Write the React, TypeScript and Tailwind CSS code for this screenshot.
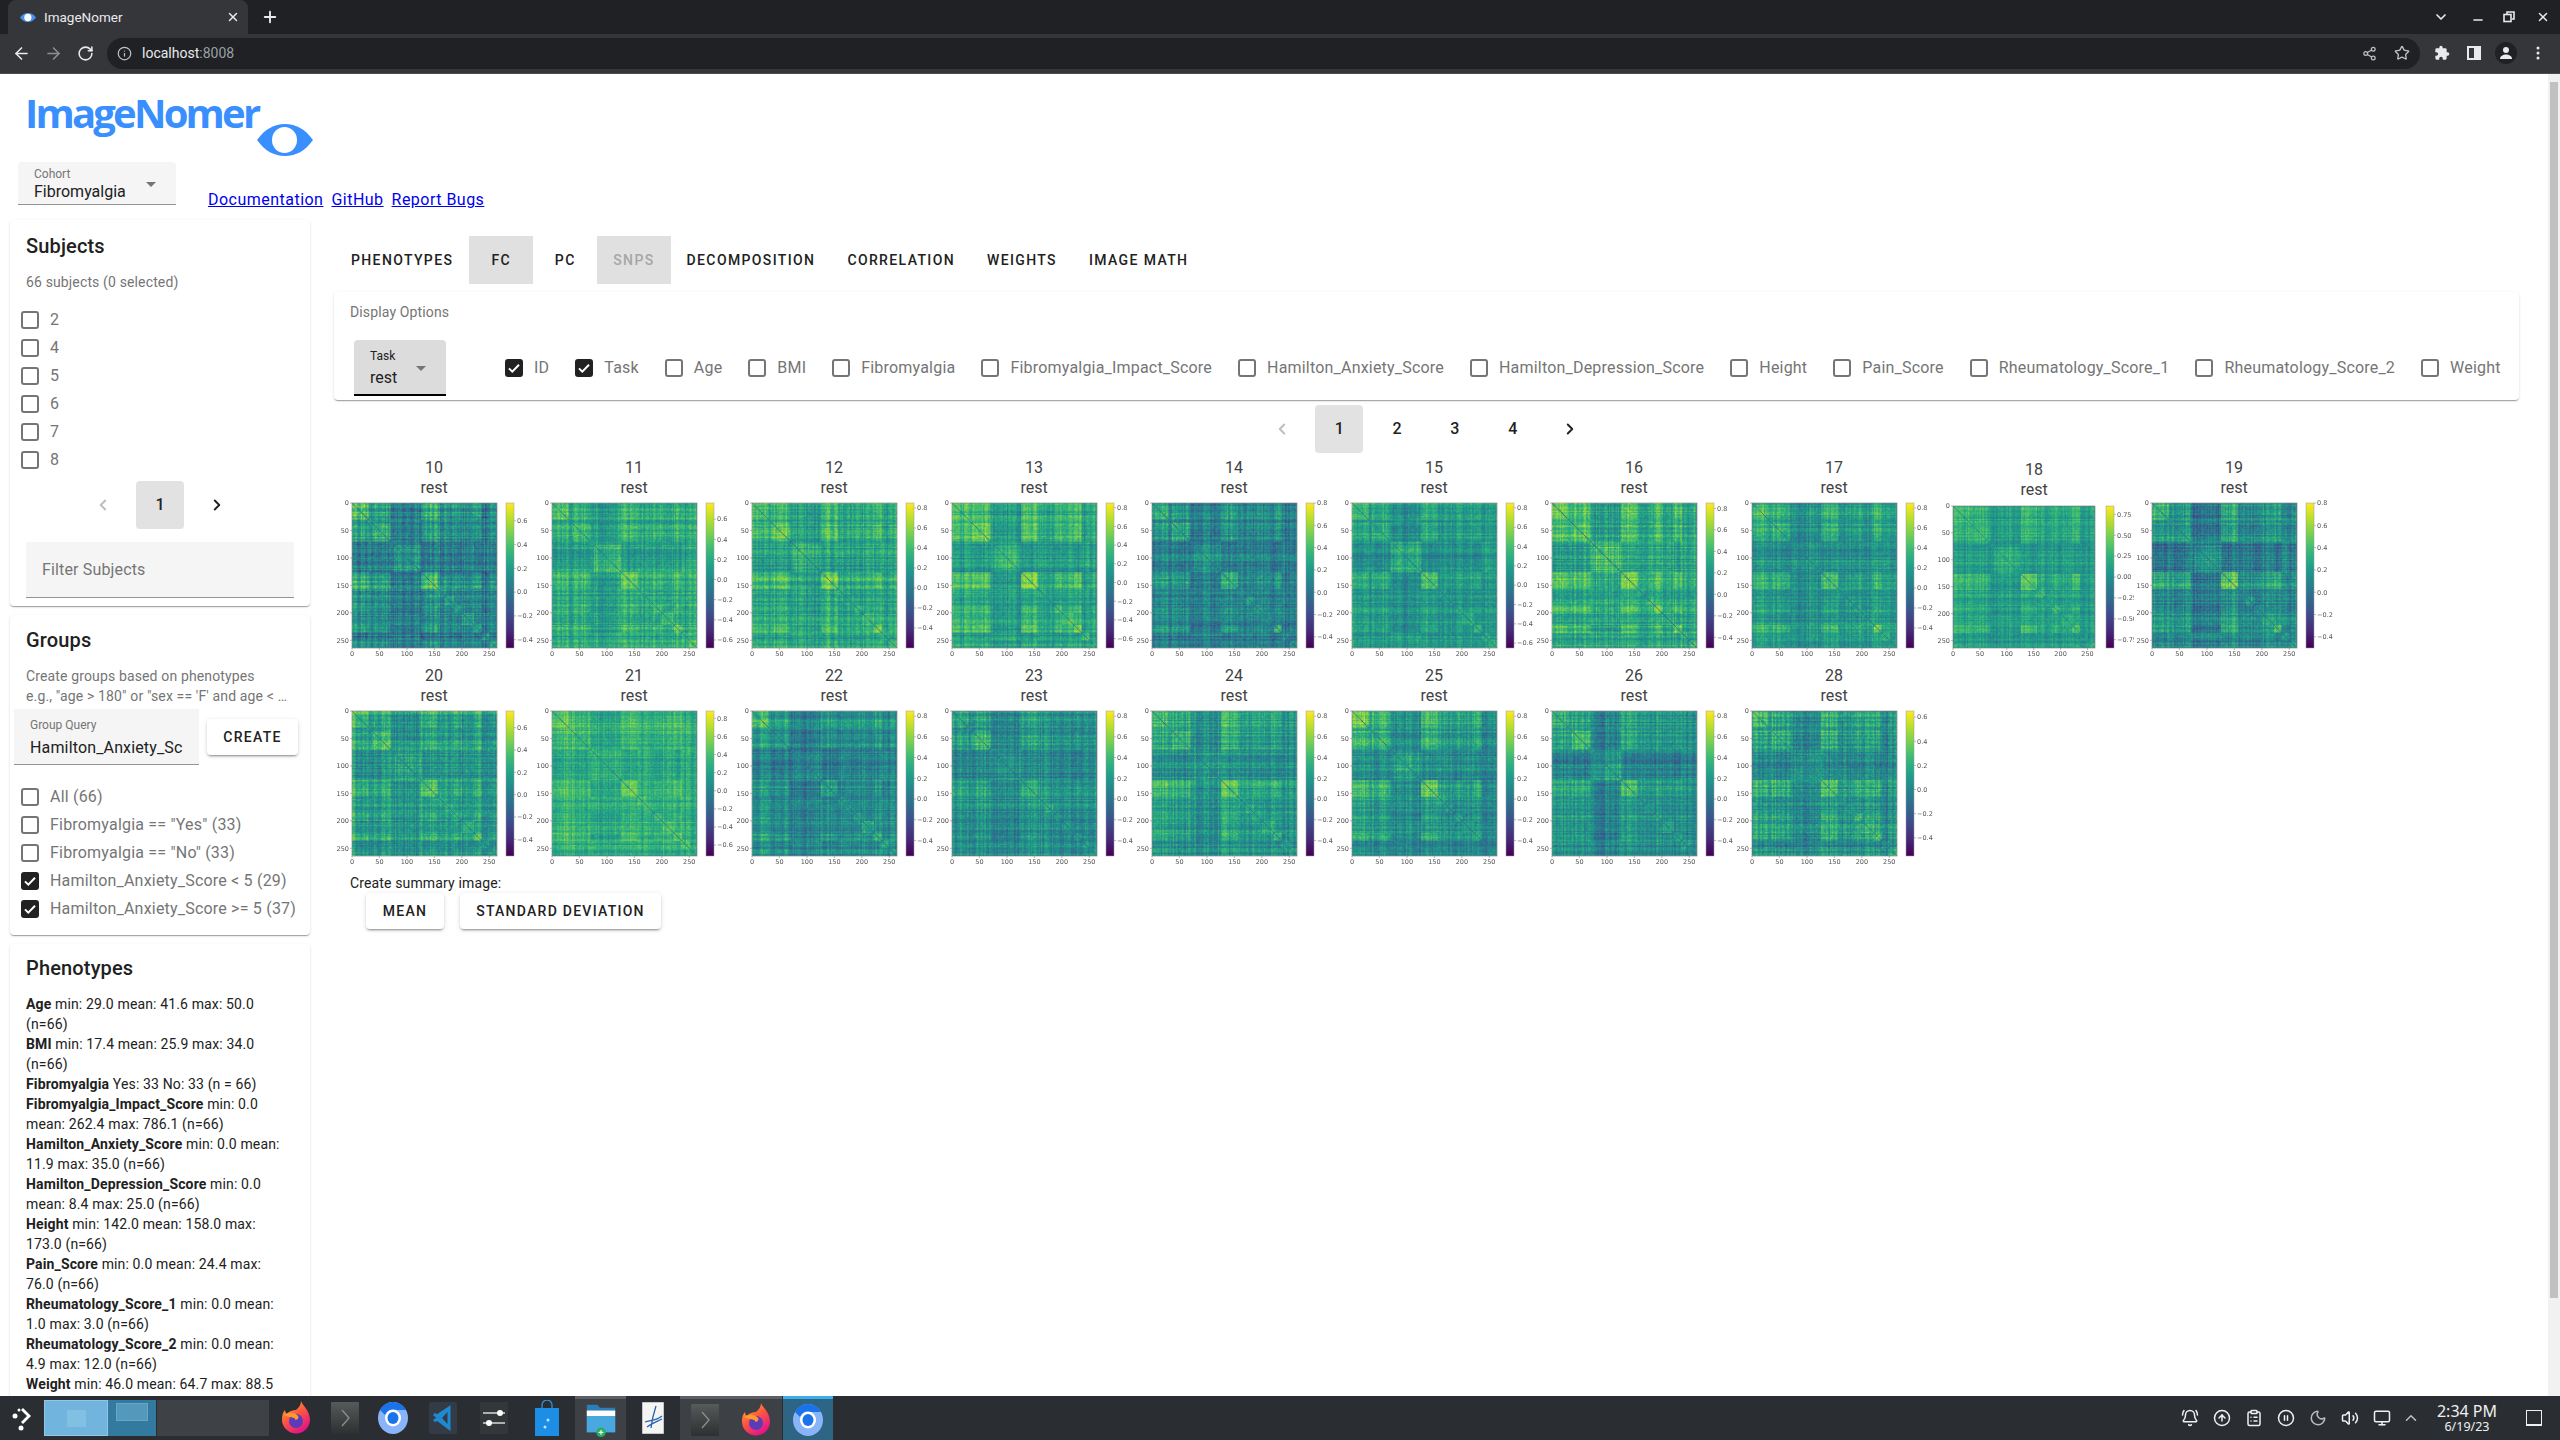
import { useEffect, useRef } from "react";
import {
  ArrowLeft,
  ArrowRight,
  BellRing,
  ChevronDown,
  ChevronLeft,
  ChevronRight,
  ChevronUp,
  CircleArrowUp,
  CirclePause,
  ClipboardList,
  Info,
  Minus,
  Monitor,
  Moon,
  Plus,
  RotateCw,
  Share2,
  Star,
  Volume2,
  X,
} from "lucide-react";

const subjects = ["2", "4", "5", "6", "7", "8"];
const groups = [
  { label: "All (66)", checked: false },
  { label: 'Fibromyalgia == "Yes" (33)', checked: false },
  { label: 'Fibromyalgia == "No" (33)', checked: false },
  { label: "Hamilton_Anxiety_Score < 5 (29)", checked: true },
  { label: "Hamilton_Anxiety_Score >= 5 (37)", checked: true },
];
const displayOptions = [
  { label: "ID", checked: true },
  { label: "Task", checked: true },
  { label: "Age", checked: false },
  { label: "BMI", checked: false },
  { label: "Fibromyalgia", checked: false },
  { label: "Fibromyalgia_Impact_Score", checked: false },
  { label: "Hamilton_Anxiety_Score", checked: false },
  { label: "Hamilton_Depression_Score", checked: false },
  { label: "Height", checked: false },
  { label: "Pain_Score", checked: false },
  { label: "Rheumatology_Score_1", checked: false },
  { label: "Rheumatology_Score_2", checked: false },
  { label: "Weight", checked: false },
];
const phenotypes = [
  ["Age", "min: 29.0 mean: 41.6 max: 50.0 (n=66)"],
  ["BMI", "min: 17.4 mean: 25.9 max: 34.0 (n=66)"],
  ["Fibromyalgia", "Yes: 33 No: 33 (n = 66)"],
  ["Fibromyalgia_Impact_Score", "min: 0.0 mean: 262.4 max: 786.1 (n=66)"],
  ["Hamilton_Anxiety_Score", "min: 0.0 mean: 11.9 max: 35.0 (n=66)"],
  ["Hamilton_Depression_Score", "min: 0.0 mean: 8.4 max: 25.0 (n=66)"],
  ["Height", "min: 142.0 mean: 158.0 max: 173.0 (n=66)"],
  ["Pain_Score", "min: 0.0 mean: 24.4 max: 76.0 (n=66)"],
  ["Rheumatology_Score_1", "min: 0.0 mean: 1.0 max: 3.0 (n=66)"],
  ["Rheumatology_Score_2", "min: 0.0 mean: 4.9 max: 12.0 (n=66)"],
  ["Weight", "min: 46.0 mean: 64.7 max: 88.5 (n=66)"],
];
const tabs = [
  { label: "PHENOTYPES" },
  { label: "FC", active: true },
  { label: "PC" },
  { label: "SNPS", disabled: true },
  { label: "DECOMPOSITION" },
  { label: "CORRELATION" },
  { label: "WEIGHTS" },
  { label: "IMAGE MATH" },
];

type Plot = { id: number; base: number; amp: number; min: number; max: number; step?: number; small?: boolean };

const plots: Plot[] = [
  { id: 10, base: 0.07, amp: 0.24, min: -0.47, max: 0.75 },
  { id: 11, base: 0.15, amp: 0.18, min: -0.68, max: 0.76 },
  { id: 12, base: 0.25, amp: 0.2, min: -0.6, max: 0.85 },
  { id: 13, base: 0.18, amp: 0.24, min: -0.7, max: 0.85 },
  { id: 14, base: 0.06, amp: 0.22, min: -0.5, max: 0.8 },
  { id: 15, base: 0.16, amp: 0.24, min: -0.65, max: 0.85 },
  { id: 16, base: 0.32, amp: 0.24, min: -0.5, max: 0.85 },
  { id: 17, base: 0.15, amp: 0.2, min: -0.6, max: 0.85 },
  { id: 18, base: 0.08, amp: 0.2, min: -0.85, max: 0.85, step: 0.25, small: true },
  { id: 19, base: 0.08, amp: 0.18, min: -0.5, max: 0.8 },
  { id: 20, base: 0.12, amp: 0.16, min: -0.55, max: 0.75 },
  { id: 21, base: 0.26, amp: 0.24, min: -0.72, max: 0.88 },
  { id: 22, base: 0.1, amp: 0.2, min: -0.55, max: 0.85 },
  { id: 23, base: 0.13, amp: 0.12, min: -0.55, max: 0.85 },
  { id: 24, base: 0.16, amp: 0.16, min: -0.55, max: 0.85 },
  { id: 25, base: 0.16, amp: 0.22, min: -0.55, max: 0.85 },
  { id: 26, base: 0.1, amp: 0.14, min: -0.55, max: 0.85 },
  { id: 28, base: 0.08, amp: 0.18, min: -0.55, max: 0.65 },
];

const viridis = [
  [68, 1, 84],
  [72, 40, 120],
  [62, 73, 137],
  [49, 104, 142],
  [38, 130, 142],
  [31, 158, 137],
  [53, 183, 121],
  [110, 206, 88],
  [181, 222, 43],
  [253, 231, 37],
];

function colorAt(t: number) {
  const x = Math.min(0.999, Math.max(0, t)) * (viridis.length - 1);
  const i = Math.floor(x);
  const f = x - i;
  return viridis[i].map((c, k) => c + (viridis[i + 1][k] - c) * f);
}

function mulberry(seed: number) {
  return () => {
    seed = (seed + 0x6d2b79f5) | 0;
    let t = Math.imul(seed ^ (seed >>> 15), 1 | seed);
    t = (t + Math.imul(t ^ (t >>> 7), 61 | t)) ^ t;
    return ((t ^ (t >>> 14)) >>> 0) / 4294967296;
  };
}

// rough network layout of the 264 ROI atlas
const networks = [0, 30, 35, 70, 75, 125, 155, 170, 185, 200, 222, 235, 250, 264];
const template = [0.55, 0.1, 0.5, -0.3, -0.3, 0.6, 0.05, 0.05, 0.3, 0.1, 0.55, -0.2, 0.05];

function drawHeatmap(canvas: HTMLCanvasElement, plot: Plot) {
  const ctx = canvas.getContext("2d");
  if (!ctx) return;
  const rand = mulberry(plot.id * 7919);
  const n = 132;
  const netOf: number[] = [];
  const line: number[] = [];
  for (let i = 0; i < n; i++) {
    const roi = i * 2;
    let a = 0;
    while (a < networks.length - 2 && roi >= networks[a + 1]) a++;
    netOf.push(a);
    line.push((rand() - 0.5) * 0.26);
  }
  const t = template.map((v) => v + (rand() - 0.5) * 0.3);
  const self = template.map(() => 0.02 + rand() * 0.12);
  const values = new Float32Array(n * n);
  for (let i = 0; i < n; i++) {
    for (let j = 0; j <= i; j++) {
      const a = netOf[i];
      const b = netOf[j];
      let v = plot.base + plot.amp * t[a] * t[b] * 1.6 + (t[a] + t[b]) * 0.07 + line[i] + line[j];
      if (a === b) v += self[a];
      v += (rand() - 0.5) * 0.2;
      if (i === j) v = 0;
      values[i * n + j] = v;
      values[j * n + i] = v;
    }
  }
  const image = ctx.createImageData(n, n);
  for (let k = 0; k < n * n; k++) {
    const [r, g, b] = colorAt((values[k] - plot.min) / (plot.max - plot.min));
    image.data[k * 4] = r;
    image.data[k * 4 + 1] = g;
    image.data[k * 4 + 2] = b;
    image.data[k * 4 + 3] = 255;
  }
  ctx.putImageData(image, 0, 0);
}

function drawColorbar(canvas: HTMLCanvasElement) {
  const ctx = canvas.getContext("2d");
  if (!ctx) return;
  for (let y = 0; y < 145; y++) {
    const [r, g, b] = colorAt(1 - y / 144);
    ctx.fillStyle = `rgb(${r},${g},${b})`;
    ctx.fillRect(0, y, 8, 1);
  }
}

function MatrixPlot({ plot }: { plot: Plot }) {
  const mapRef = useRef<HTMLCanvasElement>(null);
  const barRef = useRef<HTMLCanvasElement>(null);

  useEffect(() => {
    if (mapRef.current) drawHeatmap(mapRef.current, plot);
    if (barRef.current) drawColorbar(barRef.current);
  }, [plot]);

  const axisTicks = [0, 50, 100, 150, 200, 250];
  const step = plot.step ?? 0.2;
  const ox = plot.small ? 19 : 18;
  const oy = plot.small ? 8 : 5;
  const size = plot.small ? 142 : 145;
  const k = size / 264;
  const barTicks: number[] = [];
  for (let v = Math.ceil(plot.min / step) * step; v <= plot.max; v += step) barTicks.push(Number(v.toFixed(2)));
  const barY = (v: number) => oy + (size * (plot.max - v)) / (plot.max - plot.min);

  return (
    <div className="flex flex-col items-center">
      <div className={`h-[40px] text-center text-[16px] leading-[20px] text-[#424242] ${plot.small ? "pt-[2px]" : ""}`}>
        <div>{plot.id}</div>
        <div>rest</div>
      </div>
      <div className="relative h-[168px] w-[200px]">
        <canvas
          ref={mapRef}
          width={132}
          height={132}
          className={`absolute ${plot.small ? "left-[19px] top-[8px] h-[142px] w-[142px]" : "left-[18px] top-[5px] h-[145px] w-[145px]"}`}
        />
        <canvas
          ref={barRef}
          width={8}
          height={145}
          className={`absolute left-[172px] w-[8px] ${plot.small ? "top-[8px] h-[142px]" : "top-[5px] h-[145px]"}`}
        />
        <svg width={200} height={168} className="absolute left-0 top-0" fontFamily="'DejaVu Sans', sans-serif" fontSize={6.5} fill="#555">
          <rect x={ox} y={oy} width={size} height={size} fill="none" stroke="#8a8a8a" strokeWidth={0.7} />
          <rect x={172} y={oy} width={8} height={size} fill="none" stroke="#9a9a9a" strokeWidth={0.5} />
          {axisTicks.map((v) => (
            <g key={v}>
              <line x1={ox + v * k} x2={ox + v * k} y1={oy + size} y2={oy + size + 2} stroke="#777" strokeWidth={0.5} />
              <text x={ox + v * k} y={oy + size + 8} textAnchor="middle">{v}</text>
              <line x1={ox - 2} x2={ox} y1={oy + v * k} y2={oy + v * k} stroke="#777" strokeWidth={0.5} />
              <text x={ox - 3} y={oy + 2.3 + v * k} textAnchor="end">{v}</text>
            </g>
          ))}
          {barTicks.map((v) => (
            <g key={v}>
              <line x1={180} x2={182} y1={barY(v)} y2={barY(v)} stroke="#777" strokeWidth={0.5} />
              <text x={183} y={barY(v) + 2.3}>{v < 0 ? "\u2212" : ""}{Math.abs(v).toFixed(plot.step ? 2 : 1)}</text>
            </g>
          ))}
        </svg>
      </div>
    </div>
  );
}

function Check({ checked, label }: { checked: boolean; label: string }) {
  return (
    <div className="flex h-[28px] items-center whitespace-nowrap text-[16px] tracking-[0.0125em] text-[#757575]">
      <span className={`mr-[11px] flex h-[18px] w-[18px] shrink-0 items-center justify-center rounded-[3px] ${checked ? "bg-[#212121]" : "border-2 border-[#757575]"}`}>
        {checked ? (
          <svg width={14} height={14} viewBox="0 0 14 14">
            <path d="M2 7.4 5.3 10.6 12 3.8" fill="none" stroke="#fff" strokeWidth={2} />
          </svg>
        ) : null}
      </span>
      {label}
    </div>
  );
}

function Eye({ width, height, color = "#3a8fff" }: { width: number; height: number; color?: string }) {
  return (
    <svg width={width} height={height} viewBox="0 0 56 32">
      <path d="M0 16C8 5 17 0 28 0s20 5 28 16C48 27 39 32 28 32S8 27 0 16Z" fill={color} />
      <ellipse cx={27.5} cy={16} rx={12.5} ry={13} fill="#fff" />
    </svg>
  );
}

function Caret({ color = "#757575" }: { color?: string }) {
  return <span className="h-0 w-0 border-x-[5px] border-t-[5px] border-x-transparent" style={{ borderTopColor: color }} />;
}

function PageButton({ label, active }: { label: string; active?: boolean }) {
  return (
    <div className={`flex h-[48px] w-[48px] items-center justify-center rounded-[4px] text-[16px] font-medium text-[#212121] ${active ? "bg-[#e2e2e2]" : ""}`}>
      {label}
    </div>
  );
}

function RaisedButton({ label, className }: { label: string; className: string }) {
  return (
    <div className={`flex h-[36px] items-center justify-center rounded-[4px] bg-white text-[14px] font-medium tracking-[0.09em] text-[#212121] shadow-[0_3px_1px_-2px_rgba(0,0,0,0.2),0_2px_2px_0_rgba(0,0,0,0.14),0_1px_5px_0_rgba(0,0,0,0.12)] ${className}`}>
      {label}
    </div>
  );
}

function Card({ className, children }: { className: string; children: React.ReactNode }) {
  return (
    <section className={`rounded-[4px] bg-white shadow-[0_2px_1px_-1px_rgba(0,0,0,0.2),0_1px_1px_0_rgba(0,0,0,0.14),0_1px_3px_0_rgba(0,0,0,0.12)] ${className}`}>
      {children}
    </section>
  );
}

function BrowserChrome() {
  return (
    <header className="shrink-0 text-[#e8eaed]">
      <div className="flex h-[34px] items-end bg-[#202124]">
        <div className="ml-[8px] flex h-[34px] w-[240px] items-center rounded-t-[8px] bg-[#35363a] pl-[12px] pr-[8px]">
          <Eye width={16} height={11} color="#4a90f0" />
          <span className="ml-[8px] flex-1 text-[13.5px]">ImageNomer</span>
          <X size={14} strokeWidth={2.5} />
        </div>
        <div className="ml-[13px] flex h-[34px] items-center">
          <Plus size={18} strokeWidth={2.5} />
        </div>
        <div className="flex h-[34px] flex-1 items-center justify-end pr-[7px]">
          <ChevronDown size={16} strokeWidth={2.5} className="mr-[22px]" />
          <Minus size={14} strokeWidth={2.5} className="mr-[18px] mt-[6px]" />
          <svg width={12} height={12} viewBox="0 0 12 12" className="mr-[21px]" fill="none" stroke="#e8eaed" strokeWidth={1.6}>
            <rect x={1} y={3.5} width={7} height={7} />
            <path d="M4 3V1h7v7H9" />
          </svg>
          <X size={14} strokeWidth={2.5} className="mr-[3px]" />
        </div>
      </div>
      <div className="flex h-[40px] items-center border-b border-[#4c4d50] bg-[#35363a] pb-[1px] pl-[12px] pr-[20px]">
        <ArrowLeft size={19} strokeWidth={2} />
        <ArrowRight size={19} strokeWidth={2} className="ml-[13px] text-[#8d8e90]" />
        <RotateCw size={17} strokeWidth={2.2} className="ml-[14px]" />
        <div className="ml-[13px] flex h-[31px] flex-1 items-center rounded-full bg-[#202124] px-[10px]">
          <Info size={15} className="text-[#bdc1c6]" />
          <span className="ml-[10px] text-[14px]">localhost<span className="text-[#9aa0a6]">:8008</span></span>
          <Share2 size={15} className="ml-auto text-[#bdc1c6]" />
          <Star size={16} className="ml-[17px] text-[#bdc1c6]" />
        </div>
        <svg width={16} height={16} viewBox="0 0 24 24" className="ml-[14px]" fill="#e8eaed">
          <path d="M20.5 11H19V7a2 2 0 0 0-2-2h-4V3.5a2.5 2.5 0 0 0-5 0V5H4a2 2 0 0 0-2 2v3.8h1.5a2.7 2.7 0 0 1 0 5.4H2V20a2 2 0 0 0 2 2h3.8v-1.5a2.7 2.7 0 0 1 5.4 0V22H17a2 2 0 0 0 2-2v-4h1.5a2.5 2.5 0 0 0 0-5Z" />
        </svg>
        <svg width={14} height={14} viewBox="0 0 14 14" className="ml-[17px]">
          <rect width={14} height={14} fill="#e8eaed" />
          <rect x={2} y={2} width={5} height={10} fill="#35363a" />
        </svg>
        <div className="ml-[14px] flex h-[22px] w-[22px] items-center justify-center rounded-full bg-[#202124]">
          <svg width={14} height={14} viewBox="0 0 14 14" fill="#e8eaed">
            <circle cx={7} cy={4} r={3} />
            <path d="M1 13c0-3 3-4.5 6-4.5s6 1.500 6 4.500Z" />
          </svg>
        </div>
        <svg width={4} height={14} viewBox="0 0 4 14" className="ml-[19px]" fill="#e8eaed">
          <circle cx={2} cy={2} r={1.5} />
          <circle cx={2} cy={7} r={1.5} />
          <circle cx={2} cy={12} r={1.5} />
        </svg>
      </div>
    </header>
  );
}

function Firefox() {
  return (
    <svg width={30} height={34} viewBox="0 0 30 34">
      <defs>
        <linearGradient id="fx" x1="0" y1="0" x2="0.6" y2="1">
          <stop offset="0" stopColor="#ffbd2e" />
          <stop offset="0.5" stopColor="#ff5a3c" />
          <stop offset="1" stopColor="#e31587" />
        </linearGradient>
      </defs>
      <path d="M20 0c1 4 9 9 9 19a14 14 0 1 1-28-1c0-4 1-7 3-9 0 2 1 3 2 4 2-3 6-4 9-4 3-3 5-5 5-9Z" fill="url(#fx)" />
      <circle cx={15} cy={20} r={7} fill="#5b3bb8" />
      <path d="M3 14c4-3 10-3 13 0 3 2 1 5-2 5 2-3-5-2-11-5Z" fill="#ff9a2e" />
    </svg>
  );
}

function Chromium() {
  return (
    <svg width={30} height={32} viewBox="0 0 30 32">
      <ellipse cx={15} cy={16} rx={15} ry={16} fill="#8ab4f8" />
      <path d="M2 8a15 16 0 0 1 26 0H15a8 8 0 0 0-8 5Z" fill="#1a73e8" />
      <ellipse cx={15} cy={16} rx={8} ry={8.500} fill="#fff" />
      <ellipse cx={15} cy={16} rx={5.500} ry={6} fill="#1a73e8" />
    </svg>
  );
}

function TermIcon() {
  return (
    <svg width={28} height={32} viewBox="0 0 28 32">
      <defs>
        <linearGradient id="term" x1="0" y1="0" x2="0" y2="1">
          <stop offset="0" stopColor="#565a5a" />
          <stop offset="1" stopColor="#2c3030" />
        </linearGradient>
      </defs>
      <rect width={28} height={32} rx={1} fill="url(#term)" />
      <path d="M11 8l7 8-7 8" fill="none" stroke="#8a8f8f" strokeWidth={1.300} />
    </svg>
  );
}

function Taskbar() {
  return (
    <footer className="flex h-[44px] shrink-0 items-center bg-[#2a2e32] text-[#eff0f1]">
      <div className="flex w-[44px] justify-center">
        <svg width={26} height={26} viewBox="0 0 26 26" fill="#fff">
          <path d="M14 3l8 8-8 8 -2-2 6-6-6-6Z" />
          <circle cx={6} cy={11} r={2.500} />
          <circle cx={12} cy={23} r={2.500} />
          <circle cx={10} cy={5} r={1.500} />
        </svg>
      </div>
      <div className="flex h-[36px] w-[64px] items-center justify-center border border-[#8fc7e8] bg-[#71b5de]">
        <div className="h-[17px] w-[19px] bg-[#82c0e3]" />
      </div>
      <div className="flex h-[36px] w-[48px] justify-center bg-[#327aa0] pt-[3px]">
        <div className="h-[18px] w-[32px] border border-[#6aa5c6] bg-[#5499bc]" />
      </div>
      <div className="ml-[1px] h-[36px] w-[112px] bg-[#3e4145]" />
      <div className="ml-[12px] flex h-[44px] w-[30px] items-center"><Firefox /></div>
      <div className="ml-[20px] flex h-[44px] w-[28px] items-center"><TermIcon /></div>
      <div className="ml-[19px] flex h-[44px] w-[30px] items-center"><Chromium /></div>
      <div className="ml-[21px] flex h-[44px] w-[28px] items-center">
        <svg width={28} height={32} viewBox="0 0 28 32">
          <rect width={28} height={32} rx={2} fill="#333c46" />
          <path d="M20 6v20L8 17l-3 2 5-3-5-4 3 2Z M20 6 11 16l9 10" fill="none" stroke="#1f8ad2" strokeWidth={3} />
        </svg>
      </div>
      <div className="ml-[23px] flex h-[44px] w-[28px] items-center">
        <svg width={28} height={32} viewBox="0 0 28 32">
          <rect width={28} height={32} fill="#33373a" />
          <path d="M3 11h22M3 21h22" stroke="#d8d8d8" strokeWidth={1.500} />
          <circle cx={20} cy={11} r={3} fill="#fff" />
          <circle cx={9} cy={21} r={3} fill="#fff" />
        </svg>
      </div>
      <div className="ml-[27px] flex h-[44px] w-[24px] items-center">
        <svg width={24} height={36} viewBox="0 0 24 36">
          <path d="M7 8V5a5 5 0 0 1 10 0v3" fill="none" stroke="#2f8fdc" strokeWidth={1.300} />
          <path d="M0 8h24v28H0Z" fill="#1d8ee6" />
          <circle cx={13} cy={20} r={1.500} fill="#bfe3ff" />
          <circle cx={10} cy={27} r={1.500} fill="#bfe3ff" />
        </svg>
      </div>
      <div className="ml-[16px] flex h-[44px] w-[51px] items-center justify-center border-t-[3px] border-[#5c6065] bg-[#3d4145]">
        <svg width={30} height={36} viewBox="0 0 30 38">
          <path d="M0 3h11l3 3h16v26H0Z" fill="#2a7fb8" />
          <rect y={9} width={30} height={6} fill="#fff" />
          <rect y={15} width={30} height={17} fill="#49a8e0" />
          <circle cx={15} cy={32} r={5} fill="#27ae60" />
          <path d="M15 29.500v5M12.500 32h5" stroke="#fff" strokeWidth={1.200} />
        </svg>
      </div>
      <div className="ml-[1px] flex h-[44px] w-[51px] items-center justify-center">
        <svg width={22} height={32} viewBox="0 0 22 32">
          <rect width={22} height={32} fill="#f4f4f4" stroke="#999" strokeWidth={1} />
          <path d="M14 4c-2 6-4 14-5 22M3 20c5-2 11-1 17-6M5 25c5-4 9-5 15-8" fill="none" stroke="#2b5fb0" strokeWidth={1.300} />
        </svg>
      </div>
      <div className="ml-[2px] flex h-[44px] w-[50px] items-center justify-center border-t-[3px] border-[#5c6065] bg-[#3d4145]"><TermIcon /></div>
      <div className="flex h-[44px] w-[52px] items-center justify-center border-t-[3px] border-[#5c6065] bg-[#3d4145]"><Firefox /></div>
      <div className="ml-[1px] flex h-[44px] w-[50px] items-center justify-center border-t-[3px] border-[#3daee9] bg-[#2f6584]"><Chromium /></div>
      <div className="ml-auto flex items-center">
        <BellRing size={18} className="mr-[14px]" />
        <CircleArrowUp size={18} className="mr-[14px]" />
        <ClipboardList size={18} className="mr-[14px]" />
        <CirclePause size={18} className="mr-[14px]" />
        <Moon size={18} className="mr-[14px] text-[#b9bbbd]" />
        <Volume2 size={18} className="mr-[14px]" />
        <Monitor size={18} className="mr-[11px]" />
        <ChevronUp size={18} className="text-[#bfc1c3]" />
        <div className="ml-[15px] flex w-[64px] flex-col items-center whitespace-nowrap font-['Noto_Sans',sans-serif]">
          <span className="text-[16px] leading-[17px]">2:34 PM</span>
          <span className="text-[12.5px] leading-[13px]">6/19/23</span>
        </div>
        <div className="ml-[27px] mr-[18px] h-[16px] w-[16px] border border-[#eff0f1] shadow-[inset_0_-1px_0_#eff0f1]" />
      </div>
    </footer>
  );
}

export default function App() {
  return (
    <div className="flex h-screen w-full flex-col overflow-hidden bg-white font-['Roboto',sans-serif]">
      <BrowserChrome />
      <div className="flex min-h-0 flex-1">
        <main className="min-w-0 flex-1 overflow-hidden">
          <div className="h-[146px]">
            <div className="flex h-[61px] items-end pl-[25px]">
              <span className="font-['Open_Sans',sans-serif] text-[40px] font-bold leading-[45px] tracking-[-0.07em] text-[#3a8fff]">ImageNomer</span>
              <span className="-mb-[21px] -ml-[1px] h-[32px]"><Eye width={56} height={32} /></span>
            </div>
            <div className="mt-[27px] flex items-end pl-[18px]">
              <div className="relative h-[43px] w-[158px] rounded-t-[4px] border-b border-[#949494] bg-[#f5f5f5] pl-[16px]">
                <div className="pt-[5px] text-[12px] leading-[14px] text-[#757575]">Cohort</div>
                <div className="text-[16px] leading-[22px] text-[#212121]">Fibromyalgia</div>
                <span className="absolute right-[20px] top-[20px] flex"><Caret /></span>
              </div>
              <nav className="mb-[-5px] ml-[32px] flex gap-[8px] text-[16px] leading-[20px] tracking-[0.03em] text-[#0000ee] underline">
                <span>Documentation</span>
                <span>GitHub</span>
                <span>Report Bugs</span>
              </nav>
            </div>
          </div>
          <div className="flex">
            <aside className="ml-[10px] flex w-[300px] shrink-0 flex-col gap-[9px]">
              <Card className="h-[386px] px-[16px] pt-[14px]">
                <h2 className="text-[20px] font-medium leading-[24px] tracking-[0.0075em] text-[#212121]">Subjects</h2>
                <p className="mt-[14px] text-[14px] leading-[20px] tracking-[0.01em] text-[#757575]">66 subjects (0 selected)</p>
                <div className="-ml-[5px] mt-[14px]">
                  {subjects.map((s) => <Check key={s} checked={false} label={s} />)}
                </div>
                <div className="mt-[7px] flex items-center justify-center gap-[9px]">
                  <div className="flex h-[48px] w-[48px] items-center justify-center text-[#bdbdbd]"><ChevronLeft size={18} strokeWidth={2.5} /></div>
                  <PageButton label="1" active />
                  <div className="flex h-[48px] w-[48px] items-center justify-center text-[#212121]"><ChevronRight size={18} strokeWidth={2.5} /></div>
                </div>
                <div className="mt-[13px] flex h-[56px] items-center border-b border-[#949494] bg-[#f5f5f5] pl-[16px] text-[16px] tracking-[0.00938em] text-[#757575]">Filter Subjects</div>
              </Card>
              <Card className="h-[320px] px-[16px] pt-[13px]">
                <h2 className="text-[20px] font-medium leading-[24px] tracking-[0.0075em] text-[#212121]">Groups</h2>
                <p className="mt-[14px] text-[14px] leading-[20px] tracking-[0.01em] text-[#757575]">Create groups based on phenotypes</p>
                <p className="truncate text-[14px] leading-[20px] tracking-[0.01em] text-[#757575]">e.g., "age &gt; 180" or "sex == 'F' and age &lt; 10"</p>
                <div className="-mx-[12px] mt-[3px] flex items-center">
                  <div className="h-[56px] w-[185px] overflow-hidden border-b border-[#949494] bg-[#f5f5f5] pl-[16px]">
                    <div className="pt-[8px] text-[12px] leading-[16px] text-[#757575]">Group Query</div>
                    <div className="pt-[3px] whitespace-nowrap text-[16px] leading-[24px] tracking-[0.00938em] text-[#212121]">Hamilton_Anxiety_Sc</div>
                  </div>
                  <RaisedButton label="CREATE" className="ml-[8px] w-[91px]" />
                </div>
                <div className="-ml-[5px] mt-[18px]">
                  {groups.map((g) => <Check key={g.label} checked={g.checked} label={g.label} />)}
                </div>
              </Card>
              <Card className="h-[600px] pl-[16px] pr-[20px] pt-[12px]">
                <h2 className="text-[20px] font-medium leading-[24px] tracking-[0.0075em] text-[#212121]">Phenotypes</h2>
                <div className="mt-[14px] text-[14px] leading-[20px] tracking-[0.01em] text-[#212121]">
                  {phenotypes.map(([name, stats]) => (
                    <div key={name}><b className="font-bold">{name}</b> {stats}</div>
                  ))}
                </div>
              </Card>
            </aside>
            <div className="ml-[10px] min-w-0 flex-1">
              <nav className="ml-[15px] mt-[16px] flex h-[48px]">
                {tabs.map((tab) => (
                  <div
                    key={tab.label}
                    className={`flex min-w-[64px] items-center justify-center px-[16px] text-[14px] font-medium tracking-[0.098em] ${tab.active || tab.disabled ? "bg-[#e0e0e0]" : ""} ${tab.disabled ? "text-[#a6a6a6]" : "text-[#212121]"}`}
                  >
                    {tab.label}
                  </div>
                ))}
              </nav>
              <Card className="ml-[14px] mr-[29px] mt-[8px] h-[108px] pl-[16px] pt-[10px]">
                <p className="text-[14px] leading-[20px] tracking-[0.01em] text-[#757575]">Display Options</p>
                <div className="mt-[18px] flex items-center">
                  <div className="relative ml-[4px] h-[56px] w-[92px] rounded-t-[4px] border-b-2 border-black bg-[#dcdcdc] pl-[16px]">
                    <div className="pt-[7px] text-[12px] leading-[18px] text-[#212121]">Task</div>
                    <div className="pt-[1px] text-[16px] leading-[24px] text-[#212121]">rest</div>
                    <span className="absolute right-[20px] top-[26px] flex"><Caret /></span>
                  </div>
                  <div className="ml-[59px] mt-[-1px] flex gap-[26px]">
                    {displayOptions.map((o) => <Check key={o.label} checked={o.checked} label={o.label} />)}
                  </div>
                </div>
              </Card>
              <div className="ml-[144px] mt-[5px] flex h-[48px] items-center justify-center gap-[9.800px] pr-[160px]">
                <div className="flex h-[48px] w-[48px] items-center justify-center text-[#bdbdbd]"><ChevronLeft size={18} strokeWidth={2.5} /></div>
                <PageButton label="1" active />
                <PageButton label="2" />
                <PageButton label="3" />
                <PageButton label="4" />
                <div className="flex h-[48px] w-[48px] items-center justify-center text-[#212121]"><ChevronRight size={18} strokeWidth={2.5} /></div>
              </div>
              <div className="ml-[14px] mt-[5px] grid grid-cols-[repeat(10,200px)]">
                {plots.map((p) => <MatrixPlot key={p.id} plot={p} />)}
              </div>
              <p className="ml-[30px] mt-[-1px] text-[14px] leading-[20px] tracking-[0.01em] text-[#212121]">Create summary image:</p>
              <div className="ml-[46px] mt-[0px] flex gap-[16px]">
                <RaisedButton label="MEAN" className="w-[78px]" />
                <RaisedButton label="STANDARD DEVIATION" className="w-[201px]" />
              </div>
            </div>
          </div>
        </main>
        <div className="w-[12px] shrink-0 bg-[#f1f1f1] px-[2px]">
          <div className="mt-[8px] h-[1216px] bg-[#c1c1c1]" />
        </div>
      </div>
      <Taskbar />
    </div>
  );
}
